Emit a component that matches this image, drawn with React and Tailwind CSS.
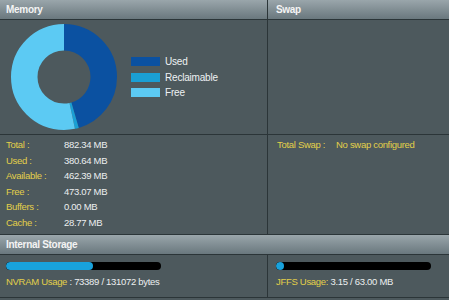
import React from 'react';

const stats = [
    { label: 'Total :', value: '882.34 MB' },
    { label: 'Used :', value: '380.64 MB' },
    { label: 'Available :', value: '462.39 MB' },
    { label: 'Free :', value: '473.07 MB' },
    { label: 'Buffers :', value: '0.00 MB' },
    { label: 'Cache :', value: '28.77 MB' },
];

const segments = [
    { pct: 45.4, color: '#0b51a1' },
    { pct: 1.2, color: '#1a9fd4' },
    { pct: 53.4, color: '#5ccaf3' },
];

const Donut = () => {
    const r = 39.75;
    const c = 2 * Math.PI * r;
    let offset = 0;
    return (
        <svg width="108" height="108" viewBox="0 0 108 108">
            <g transform="rotate(-90 54 54)">
                {segments.map((s, i) => {
                    const len = (s.pct / 100) * c;
                    const el = (
                        <circle
                            key={i}
                            cx="54"
                            cy="54"
                            r={r}
                            fill="none"
                            stroke={s.color}
                            strokeWidth="26.5"
                            strokeDasharray={`${len} ${c - len}`}
                            strokeDashoffset={-offset}
                        />
                    );
                    offset += len;
                    return el;
                })}
            </g>
        </svg>
    );
};

const Header = ({ children, className = '' }) => (
    <div className={`h-[20px] flex items-center px-[6px] bg-gradient-to-b from-[#9aa6ab] to-[#6a787e] border-b border-[#2b3538] text-[10px] font-bold text-[#f4f4f4] ${className}`}>
        {children}
    </div>
);

const Bar = ({ pct }) => (
    <div className="w-[155px] h-[8px] rounded-full bg-black overflow-hidden">
        <div className="h-full rounded-full bg-[#18a2dc]" style={{ width: `${Math.max(pct, 4.5)}%` }} />
    </div>
);

const legend = [
    { label: 'Used', color: 'bg-[#0b51a1]' },
    { label: 'Reclaimable', color: 'bg-[#1a9fd4]' },
    { label: 'Free', color: 'bg-[#5ccaf3]' },
];

export default function App() {
    return (
        <div className="w-[449px] h-[300px] bg-[#4d595d] overflow-hidden text-[9.5px] tracking-[-0.3px]" style={{ fontFamily: '"Liberation Sans", Arial, sans-serif' }}>
            <div className="grid grid-cols-[268px_181px]">
                <Header className="border-r border-r-[#2b3538]">Memory</Header>
                <Header className="pl-[8px]">Swap</Header>

                <div className="h-[115px] border-r border-b border-[#2b3538] flex items-center">
                    <div className="ml-[10px]">
                        <Donut />
                    </div>
                    <div className="ml-[13px] flex flex-col text-[10px] tracking-[-0.2px] text-[#eef2f3]">
                        {legend.map((l) => (
                            <div key={l.label} className="flex items-center gap-[5px] h-[15.5px]">
                                <span className={`w-[29px] h-[9px] ${l.color}`} />
                                {l.label}
                            </div>
                        ))}
                    </div>
                </div>
                <div className="h-[115px] border-b border-[#2b3538]" />

                <div className="h-[100px] border-r border-b border-[#2b3538] px-[6px] pt-[2px]">
                    {stats.map((s) => (
                        <div key={s.label} className="flex leading-[15.6px]">
                            <span className="w-[58px] text-[#e3d04a]">{s.label}</span>
                            <span className="text-[#eceff0]">{s.value}</span>
                        </div>
                    ))}
                </div>
                <div className="h-[100px] border-b border-[#2b3538] pl-[9px] pt-[2px]">
                    <div className="flex leading-[15.6px] text-[#e3d04a]">
                        <span className="w-[59px]">Total Swap :</span>
                        <span>No swap configured</span>
                    </div>
                </div>

                <Header className="col-span-2">Internal Storage</Header>

                <div className="h-[43px] border-r border-b border-[#2b3538] px-[6px] pt-[7px]">
                    <Bar pct={56} />
                    <div className="mt-[4px] leading-[15px]">
                        <span className="text-[#e3d04a]">NVRAM Usage</span>
                        <span className="text-[#eceff0]"> : 73389 / 131072 bytes</span>
                    </div>
                </div>
                <div className="h-[43px] border-b border-[#2b3538] pl-[8px] pt-[7px]">
                    <Bar pct={5} />
                    <div className="mt-[4px] leading-[15px]">
                        <span className="text-[#e3d04a]">JFFS Usage:</span>
                        <span className="text-[#eceff0]"> 3.15 / 63.00 MB</span>
                    </div>
                </div>
            </div>
        </div>
    );
}
